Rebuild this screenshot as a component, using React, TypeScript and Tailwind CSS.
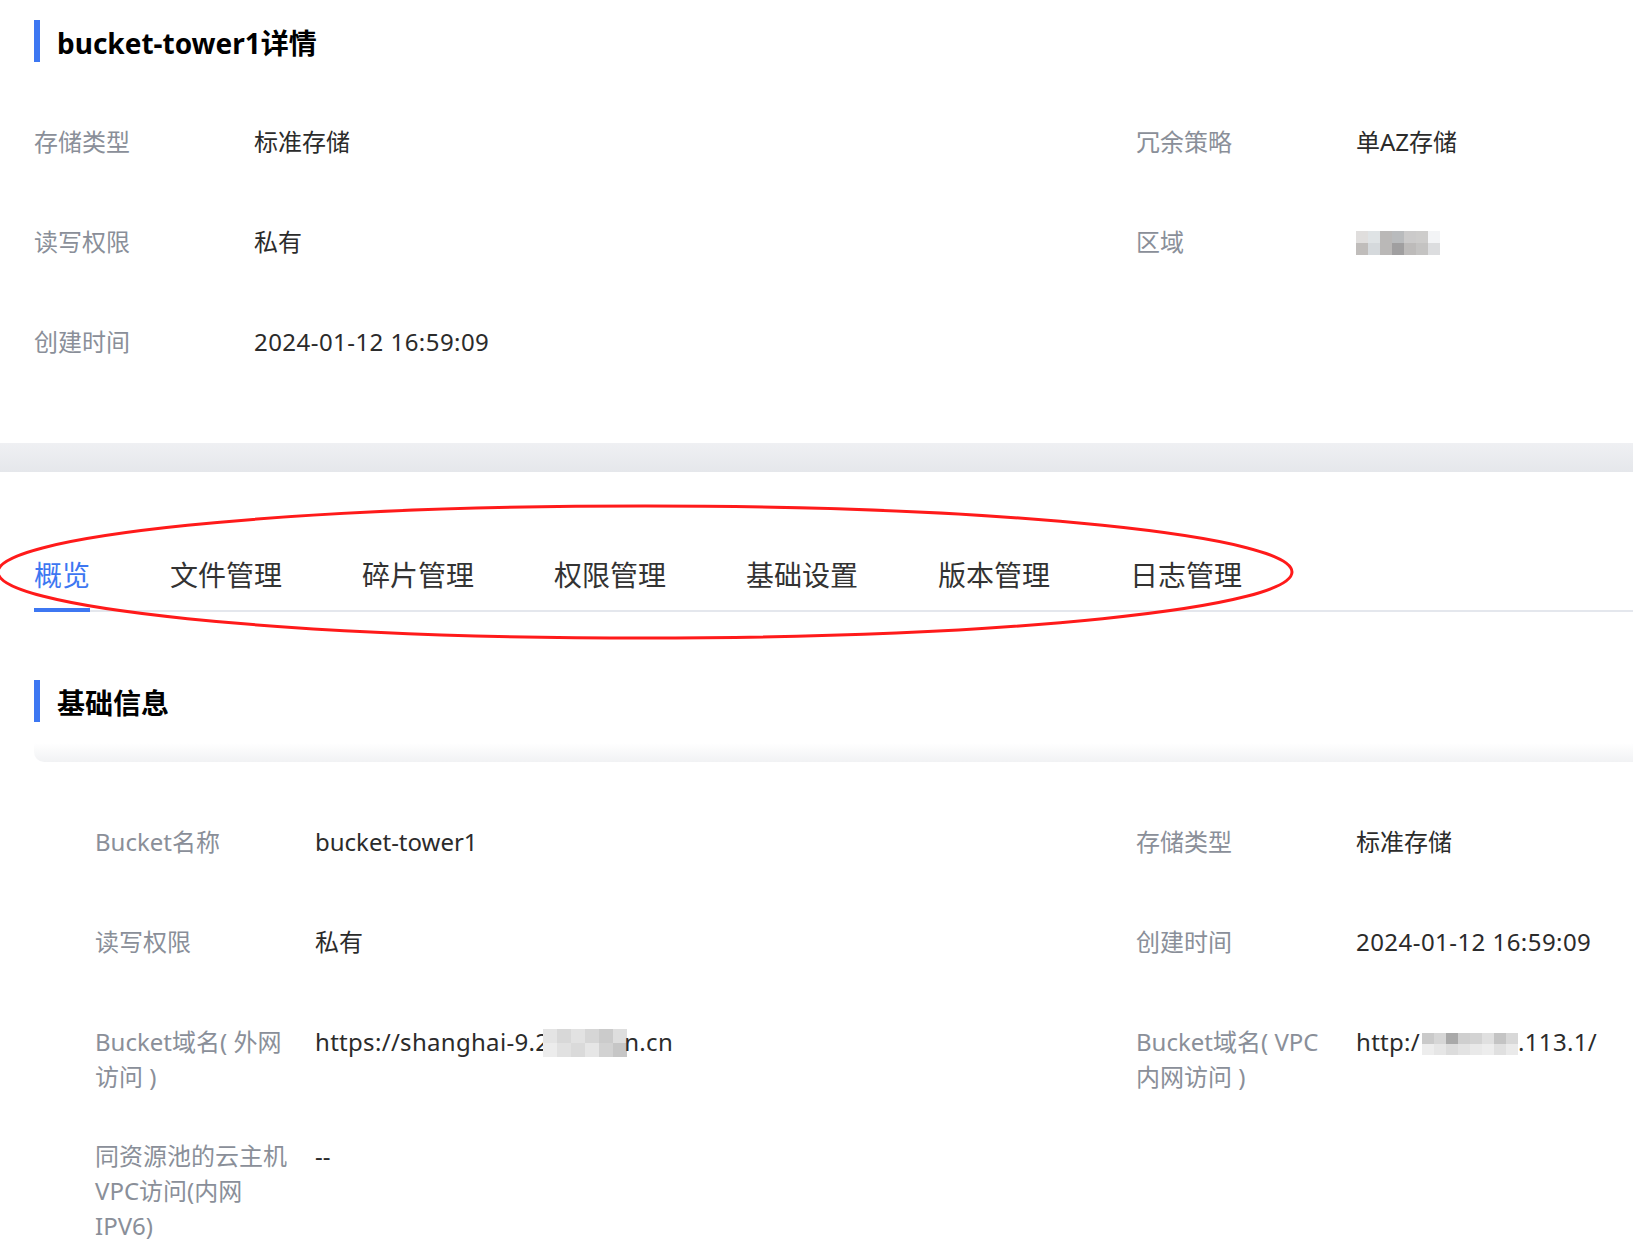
import React from "react"

type Row = { label: string; value: React.ReactNode }

// pixelated blur blocks that hide parts of values in the screenshot
function Mosaic({ rows, cell, className = "" }: { rows: string[][]; cell: string; className?: string }) {
  return (
    <span className={`inline-flex flex-col align-middle ${className}`}>
      {rows.map((r, i) => (
        <span key={i} className="flex">
          {r.map((c, j) => (
            <span key={j} className={cell} style={{ backgroundColor: c }} />
          ))}
        </span>
      ))}
    </span>
  )
}

function Item({ label, value }: Row) {
  return (
    <div className="flex min-h-[56px] text-[24px] leading-[35px]">
      <div className="w-[220px] shrink-0 pr-[20px] text-[#8a8f99]">{label}</div>
      <div className="whitespace-nowrap text-[#2b2b2b]">{value}</div>
    </div>
  )
}

function Heading({ title }: { title: string }) {
  return (
    <div className="flex h-[42px] items-center">
      <div className="h-[42px] w-[6px] bg-[#3d77f2]" />
      <h2 className="ml-[17px] pt-[3px] text-[28px] font-bold leading-[42px] text-black">{title}</h2>
    </div>
  )
}

const regionBlur = [
  ["#e0dedd", "#dfe3e5", "#bab8b7", "#b9bbbd", "#cbcaca", "#cdcccb", "#f3f4f6"],
  ["#c0bdbb", "#d5d9dc", "#bab8b7", "#a09fa0", "#bdbbba", "#c4c3c2", "#dcdddf"],
]

const httpsBlur = [
  ["#e4e4e4", "#d8d8d8", "#e2e2e2", "#d6d6d6", "#cbcbcb", "#dedede"],
  ["#ececec", "#e1e1e1", "#dadada", "#e6e6e6", "#d2d2d2", "#c6c6c6"],
]

const httpBlur = [
  ["#cacaca", "#d6d6d6", "#a9a9a9", "#cfcfcf", "#d3d3d3", "#e0e0e0", "#c4c4c4", "#d8d8d8"],
  ["#ededed", "#e6e6e6", "#dcdcdc", "#e3e3e3", "#e9e9e9", "#ededed", "#e0e0e0", "#eaeaea"],
]

const tabs = ["概览", "文件管理", "碎片管理", "权限管理", "基础设置", "版本管理", "日志管理"]

const Date = () => <span className="tracking-[0.45px]">2024-01-12 16:59:09</span>

function App() {
  const top: Row[] = [
    { label: "存储类型", value: "标准存储" },
    { label: "冗余策略", value: "单AZ存储" },
    { label: "读写权限", value: "私有" },
    { label: "区域", value: <Mosaic rows={regionBlur} cell="h-[12px] w-[12px]" className="mt-[-4px]" /> },
    { label: "创建时间", value: <Date /> },
  ]

  const info: Row[] = [
    { label: "Bucket名称", value: "bucket-tower1" },
    { label: "存储类型", value: "标准存储" },
    { label: "读写权限", value: "私有" },
    { label: "创建时间", value: <Date /> },
    {
      label: "Bucket域名( 外网访问 )",
      value: (
        <span className="tracking-[0.3px]">
          https://shanghai-9.2
          <Mosaic rows={httpsBlur} cell="h-[14px] w-[14px]" className="ml-[-6px] mt-[-4px]" />
          <span className="ml-[-3px]">n.cn</span>
        </span>
      ),
    },
    {
      label: "Bucket域名( VPC内网访问 )",
      value: (
        <span className="tracking-[0.3px]">
          http:/
          <Mosaic rows={httpBlur} cell="h-[11px] w-[12px]" className="ml-[2px] mt-[-2px]" />
          .113.1/
        </span>
      ),
    },
    { label: "同资源池的云主机VPC访问(内网IPV6)", value: "--" },
  ]

  return (
    <div
      className="relative min-h-screen overflow-hidden bg-white"
      style={{ fontFamily: '"Noto Sans", "Noto Sans CJK SC", sans-serif' }}
    >
      {/* Header info */}
      <section className="pl-[34px] pt-[20px]">
        <Heading title="bucket-tower1详情" />
        <div className="mb-[63px] mt-[62px] grid grid-cols-[1102px_1fr] gap-y-[44px]">
          {top.map((r, i) => (
            <Item key={i} {...r} />
          ))}
        </div>
      </section>

      <div className="h-[29px] bg-gradient-to-b from-[#eff0f3] to-[#e5e7eb]" />

      {/* Tabs */}
      <div className="ml-[34px] mt-[83px] flex gap-[80px] border-b-2 border-[#e4e7ed]">
        {tabs.map((t, i) => (
          <div
            key={t}
            className={`relative pb-[15px] text-[28px] leading-[40px] ${i === 0 ? "text-[#3d77f2]" : "text-[#333333]"}`}
          >
            {t}
            {i === 0 && <div className="absolute bottom-[-2px] left-0 right-0 h-[4px] bg-[#3d77f2]" />}
          </div>
        ))}
      </div>

      {/* Basic info */}
      <div className="ml-[34px] mt-[68px]">
        <Heading title="基础信息" />
      </div>
      <div className="ml-[34px] mt-[21px] h-[19px] rounded-bl-[10px] bg-gradient-to-b from-white to-[#f1f2f4]" />
      <div className="ml-[34px] grid grid-cols-[1041px_1fr] gap-y-[44px] bg-white pb-[40px] pl-[61px] pt-[62px]">
        {info.map((r, i) => (
          <Item key={i} {...r} />
        ))}
      </div>

      {/* annotation */}
      <svg className="pointer-events-none absolute left-0 top-0" width="1633" height="700" viewBox="0 0 1633 700">
        <ellipse cx="645" cy="572" rx="647" ry="66" fill="none" stroke="#ff1a1a" strokeWidth="3" />
      </svg>
    </div>
  )
}

export default App
